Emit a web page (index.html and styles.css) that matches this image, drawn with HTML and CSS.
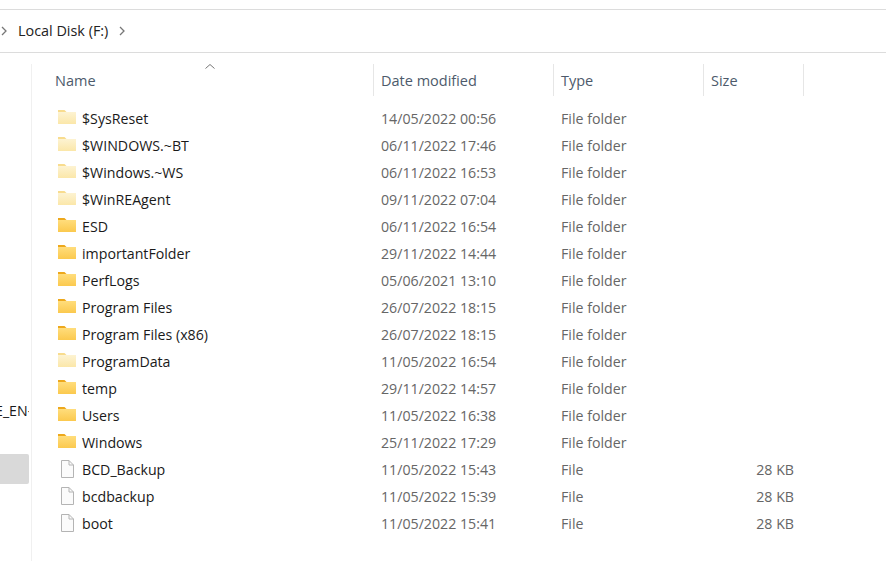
FILE: index.html
```html
<!DOCTYPE html>
<html lang="en">
<head>
    <meta charset="UTF-8">
    <title>Local Disk (F:)</title>
    <link rel="stylesheet" href="styles.css">
</head>
<body>
    <svg class="icon-defs" width="0" height="0">
        <defs>
            <linearGradient id="lightFill" x1="0" y1="0" x2="0" y2="1">
                <stop offset="0" stop-color="#fdf3d2"/>
                <stop offset="1" stop-color="#fbe7a9"/>
            </linearGradient>
            <linearGradient id="solidFill" x1="0" y1="0" x2="0" y2="1">
                <stop offset="0" stop-color="#ffdd7c"/>
                <stop offset="1" stop-color="#fbc94e"/>
            </linearGradient>
            <symbol id="folderLight" viewBox="0 0 20 16">
                <path d="M1 1h6.500l2 2H1z" fill="#f8dc8e"/>
                <path d="M1 3h18v12H1z" fill="url(#lightFill)"/>
            </symbol>
            <symbol id="folderSolid" viewBox="0 0 20 16">
                <path d="M1 1h6.500l2 2H1z" fill="#eda81c"/>
                <path d="M1 3h18v12H1z" fill="url(#solidFill)"/>
            </symbol>
            <symbol id="fileIcon" viewBox="0 0 16 20">
                <path d="M2.500 2.500h7.500l4.500 4.500v12.500h-12z" fill="#fbfbfb" stroke="#b4b4b4"/>
                <path d="M10 2.500v4.500h4.500" fill="none" stroke="#b4b4b4"/>
            </symbol>
        </defs>
    </svg>

    <header class="address-bar">
        <svg class="chevron" width="8" height="10" viewBox="0 0 8 10"><path d="M2 1l4 4-4 4" fill="none" stroke="#777" stroke-width="1.300"/></svg>
        <span class="crumb">Local Disk (F:)</span>
        <svg class="chevron" width="8" height="10" viewBox="0 0 8 10"><path d="M2 1l4 4-4 4" fill="none" stroke="#777" stroke-width="1.300"/></svg>
    </header>

    <div class="explorer">
        <aside class="sidebar">
            <div class="side-label">E_EN-</div>
            <div class="side-selected"></div>
        </aside>

        <main class="file-list">
            <svg class="sort-caret" width="12" height="7" viewBox="0 0 12 7"><path d="M1.500 5.500L6 1.500l4.500 4" fill="none" stroke="#777"/></svg>

            <div class="row head">
                <div class="col col-name">Name</div>
                <div class="col col-date">Date modified</div>
                <div class="col col-type">Type</div>
                <div class="col col-size">Size</div>
            </div>

            <div class="rows">
                <div class="row">
                    <div class="col col-name"><svg class="icon"><use href="#folderLight"/></svg>$SysReset</div>
                    <div class="col col-date">14/05/2022 00:56</div>
                    <div class="col col-type">File folder</div>
                    <div class="col col-size"></div>
                </div>
                <div class="row">
                    <div class="col col-name"><svg class="icon"><use href="#folderLight"/></svg>$WINDOWS.~BT</div>
                    <div class="col col-date">06/11/2022 17:46</div>
                    <div class="col col-type">File folder</div>
                    <div class="col col-size"></div>
                </div>
                <div class="row">
                    <div class="col col-name"><svg class="icon"><use href="#folderLight"/></svg>$Windows.~WS</div>
                    <div class="col col-date">06/11/2022 16:53</div>
                    <div class="col col-type">File folder</div>
                    <div class="col col-size"></div>
                </div>
                <div class="row">
                    <div class="col col-name"><svg class="icon"><use href="#folderLight"/></svg>$WinREAgent</div>
                    <div class="col col-date">09/11/2022 07:04</div>
                    <div class="col col-type">File folder</div>
                    <div class="col col-size"></div>
                </div>
                <div class="row">
                    <div class="col col-name"><svg class="icon"><use href="#folderSolid"/></svg>ESD</div>
                    <div class="col col-date">06/11/2022 16:54</div>
                    <div class="col col-type">File folder</div>
                    <div class="col col-size"></div>
                </div>
                <div class="row">
                    <div class="col col-name"><svg class="icon"><use href="#folderSolid"/></svg>importantFolder</div>
                    <div class="col col-date">29/11/2022 14:44</div>
                    <div class="col col-type">File folder</div>
                    <div class="col col-size"></div>
                </div>
                <div class="row">
                    <div class="col col-name"><svg class="icon"><use href="#folderSolid"/></svg>PerfLogs</div>
                    <div class="col col-date">05/06/2021 13:10</div>
                    <div class="col col-type">File folder</div>
                    <div class="col col-size"></div>
                </div>
                <div class="row">
                    <div class="col col-name"><svg class="icon"><use href="#folderSolid"/></svg>Program Files</div>
                    <div class="col col-date">26/07/2022 18:15</div>
                    <div class="col col-type">File folder</div>
                    <div class="col col-size"></div>
                </div>
                <div class="row">
                    <div class="col col-name"><svg class="icon"><use href="#folderSolid"/></svg>Program Files (x86)</div>
                    <div class="col col-date">26/07/2022 18:15</div>
                    <div class="col col-type">File folder</div>
                    <div class="col col-size"></div>
                </div>
                <div class="row">
                    <div class="col col-name"><svg class="icon"><use href="#folderLight"/></svg>ProgramData</div>
                    <div class="col col-date">11/05/2022 16:54</div>
                    <div class="col col-type">File folder</div>
                    <div class="col col-size"></div>
                </div>
                <div class="row">
                    <div class="col col-name"><svg class="icon"><use href="#folderSolid"/></svg>temp</div>
                    <div class="col col-date">29/11/2022 14:57</div>
                    <div class="col col-type">File folder</div>
                    <div class="col col-size"></div>
                </div>
                <div class="row">
                    <div class="col col-name"><svg class="icon"><use href="#folderSolid"/></svg>Users</div>
                    <div class="col col-date">11/05/2022 16:38</div>
                    <div class="col col-type">File folder</div>
                    <div class="col col-size"></div>
                </div>
                <div class="row">
                    <div class="col col-name"><svg class="icon"><use href="#folderSolid"/></svg>Windows</div>
                    <div class="col col-date">25/11/2022 17:29</div>
                    <div class="col col-type">File folder</div>
                    <div class="col col-size"></div>
                </div>
                <div class="row">
                    <div class="col col-name"><svg class="icon"><use href="#fileIcon"/></svg>BCD_Backup</div>
                    <div class="col col-date">11/05/2022 15:43</div>
                    <div class="col col-type">File</div>
                    <div class="col col-size">28 KB</div>
                </div>
                <div class="row">
                    <div class="col col-name"><svg class="icon"><use href="#fileIcon"/></svg>bcdbackup</div>
                    <div class="col col-date">11/05/2022 15:39</div>
                    <div class="col col-type">File</div>
                    <div class="col col-size">28 KB</div>
                </div>
                <div class="row">
                    <div class="col col-name"><svg class="icon"><use href="#fileIcon"/></svg>boot</div>
                    <div class="col col-date">11/05/2022 15:41</div>
                    <div class="col col-type">File</div>
                    <div class="col col-size">28 KB</div>
                </div>
            </div>
        </main>
    </div>
</body>
</html>
```

FILE: styles.css
```css
* {
    margin: 0;
    padding: 0;
    box-sizing: border-box;
}

html, body {
    height: 100%;
    overflow: hidden;
}

body {
    font-family: 'Open Sans', 'Noto Sans', sans-serif;
    font-size: 14.2px;
    background: #fff;
    color: #1a1a1a;
    display: flex;
    flex-direction: column;
    padding-top: 9px;
}

.icon-defs {
    position: absolute;
}

.address-bar {
    height: 44px;
    display: flex;
    align-items: center;
    border-top: 1px solid #dcdcdc;
    border-bottom: 1px solid #dcdcdc;
}

.crumb {
    margin: 0 10px 0 10px;
    font-size: 14.4px;
    color: #222;
    position: relative;
    top: -1px;
}

.explorer {
    flex: 1;
    display: flex;
    padding-top: 11px;
}

.sidebar {
    width: 32px;
    flex-shrink: 0;
    border-right: 1px solid #f0f0f0;
    padding-top: 337px;
}

.side-label {
    width: 29px;
    height: 20px;
    line-height: 20px;
    white-space: nowrap;
    overflow: hidden;
    text-indent: -5px;
}

.side-selected {
    width: 29px;
    height: 30px;
    margin-top: 33px;
    background: #d9d9d9;
    border-radius: 0 2px 2px 0;
}

.file-list {
    position: relative;
    flex: 1;
}

.sort-caret {
    position: absolute;
    left: 172px;
    top: -1px;
}

.row {
    display: grid;
    grid-template-columns: 342px 180px 150px 100px;
    height: 27px;
    align-items: center;
}

.head {
    height: 32px;
    margin-bottom: 9px;
    align-items: stretch;
}

.head .col {
    display: flex;
    align-items: center;
    color: #4d5a6b;
    font-size: 14.5px;
    padding-left: 7px;
    border-right: 1px solid #e6e6e6;
}

.head .col-name {
    padding-left: 23px;
}

.col {
    white-space: nowrap;
}

.col-name {
    display: flex;
    align-items: center;
    padding-left: 25px;
}

.col-date, .col-type {
    color: #666;
    padding-left: 7px;
}

.col-size {
    color: #666;
    text-align: right;
    padding-right: 10px;
}

.icon {
    width: 20px;
    height: 20px;
    margin-right: 5px;
    flex-shrink: 0;
    position: relative;
    top: -2px;
}
```
